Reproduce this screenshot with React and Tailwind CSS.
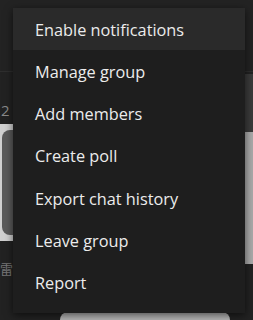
import React from 'react';

const items = [
  'Enable notifications',
  'Manage group',
  'Add members',
  'Create poll',
  'Export chat history',
  'Leave group',
  'Report',
];

const App = () => {
  return (
    <div
      className="relative w-[253px] h-[320px] overflow-hidden bg-[#222222]"
      style={{ fontFamily: '"Open Sans", "Noto Sans", "Noto Sans CJK SC", sans-serif' }}
    >
      {/* Background page */}
      <div className="flex flex-col h-full">
        <div className="h-[72px] bg-[#232323] border-b border-[#2e2e2e]" />
        <div className="flex flex-1">
          <div className="w-[13px] flex flex-col">
            <div className="h-[48px] flex items-end pb-[2px] text-[15px] leading-none text-[#8a8a8a] pl-[1px]">2</div>
            <div className="mt-[4px] h-[117px] bg-[#d0d0d0] pl-[2px] py-[6px]">
              <div className="h-full rounded-l-[8px] bg-[#5a5a5a]" />
            </div>
            <div className="mt-[22px] text-[13px] text-[#777777] leading-none">雷</div>
          </div>
          <div className="flex-1" />
          <div className="w-[8px] flex flex-col pt-[2px]">
            <div className="h-[190px] bg-[#a9a9a9] flex flex-col">
              <div className="h-[58px] bg-[#3a3a3a]" />
            </div>
          </div>
        </div>
        <div className="h-[8px] flex">
          <div className="w-[60px]" />
          <div className="w-[170px] bg-[#b5b5b5] rounded-t-[20px]" />
        </div>
      </div>

      {/* Dropdown menu */}
      <div className="absolute left-[13px] top-[8px] w-[232px] bg-[#1e1e1e] pb-[10px] shadow-[0_2px_8px_rgba(0,0,0,0.6)]">
        {items.map((label, i) => (
          <div
            key={label}
            className={`h-[42.2px] flex items-center pl-[22px] pt-[2px] text-[16.3px] text-[#ececec] ${
              i === 0 ? 'bg-[#2a2a2a]' : ''
            }`}
          >
            {label}
          </div>
        ))}
      </div>
    </div>
  );
};

export default App;
